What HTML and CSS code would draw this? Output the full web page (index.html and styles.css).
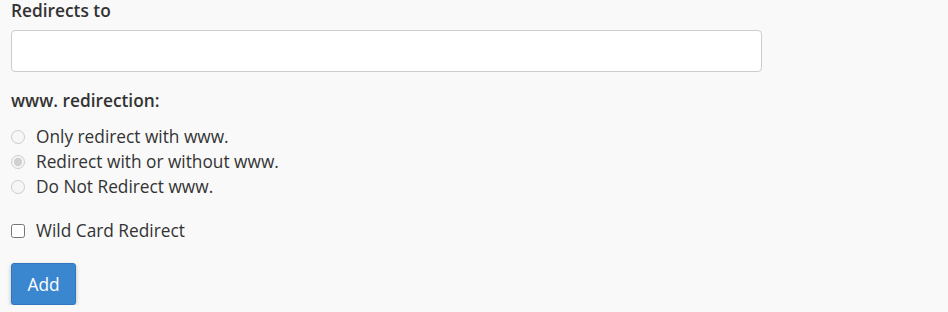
FILE: index.html
```html
<!DOCTYPE html>
<html>
<head>
<meta charset="utf-8">
<link rel="stylesheet" href="styles.css">
</head>
<body>
<div class="form">
  <label class="field-label" for="target">Redirects to</label>
  <input class="text-input" id="target" type="text">
  <div class="group-label">www. redirection:</div>
  <div class="radios">
    <label class="opt"><input type="radio" name="www" disabled><span>Only redirect with www.</span></label>
    <label class="opt"><input type="radio" name="www" checked disabled><span>Redirect with or without www.</span></label>
    <label class="opt"><input type="radio" name="www" disabled><span>Do Not Redirect www.</span></label>
  </div>
  <label class="opt check"><input type="checkbox"><span>Wild Card Redirect</span></label>
  <button class="btn" type="button">Add</button>
</div>
</body>
</html>
```
FILE: styles.css
```css
html, body {
  margin: 0;
  padding: 0;
  background: #f9f9f9;
}
body {
  font-family: "Open Sans", "Liberation Sans", sans-serif;
  font-size: 17.3px;
  color: #333;
}
.form {
  display: flex;
  flex-direction: column;
  align-items: flex-start;
  padding: 0 11px;
}
.field-label {
  display: block;
  font-weight: 600;
  line-height: 22px;
}
.text-input {
  box-sizing: border-box;
  width: 751px;
  height: 42px;
  margin: 8px 0 0;
  border: 1px solid #cccccc;
  border-radius: 4px;
  background: #fff;
  padding: 6px 12px;
  font: inherit;
}
.group-label {
  font-weight: 600;
  line-height: 22px;
  margin-top: 18px;
}
.radios {
  display: flex;
  flex-direction: column;
  margin-top: 12px;
}
.opt {
  display: flex;
  align-items: center;
  line-height: 25px;
  height: 25px;
}
.opt input {
  width: 14px;
  height: 14px;
  margin: 1px 11px 0 0;
  flex: none;
}
.opt span {
  white-space: nowrap;
}
.check {
  margin-top: 19px;
}
.btn {
  margin-top: 20px;
  box-sizing: border-box;
  height: 42px;
  width: 65px;
  padding: 0;
  font: inherit;
  color: #fff;
  background: #3a87cf;
  border: 1px solid #2f78bd;
  border-radius: 3px;
  box-shadow: 0 2px 4px rgba(0,0,0,0.25);
}
```
